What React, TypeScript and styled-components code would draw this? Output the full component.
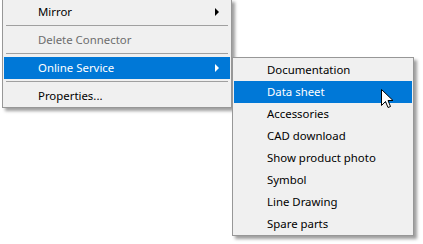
import styled, { createGlobalStyle } from 'styled-components';

const GlobalStyle = createGlobalStyle`
  html, body {
    margin: 0;
    padding: 0;
    background: #ffffff;
  }
  body {
    font-family: "Noto Sans", "Open Sans", sans-serif;
  }
`;

const Screen = styled.div`
  width: 423px;
  height: 244px;
  overflow: hidden;
  display: flex;
  align-items: flex-start;
  position: relative;
  background: #ffffff;
`;

const Menu = styled.div<{ $width: number; $top: number; $left: number }>`
  width: ${(p) => p.$width}px;
  margin-top: ${(p) => p.$top}px;
  margin-left: ${(p) => p.$left}px;
  box-sizing: border-box;
  flex: none;
  background: #f0f0f0;
  border: 1px solid #979797;
  padding: 1px 1px 0;
  box-shadow: 3px 3px 3px rgba(0, 0, 0, 0.38);
`;

const Item = styled.div<{ $active?: boolean; $disabled?: boolean; $indent: number }>`
  height: 22px;
  display: flex;
  align-items: center;
  padding-left: ${(p) => p.$indent}px;
  padding-right: 11px;
  font-size: 11.4px;
  line-height: 22px;
  background: ${(p) => (p.$active ? '#0078d7' : 'transparent')};
  color: ${(p) => (p.$active ? '#ffffff' : p.$disabled ? '#6d6d6d' : '#000000')};
  white-space: nowrap;
`;

const Label = styled.span`
  flex: 1;
`;

const Arrow = styled.span<{ $light?: boolean }>`
  width: 0;
  height: 0;
  border-top: 4px solid transparent;
  border-bottom: 4px solid transparent;
  border-left: 4px solid ${(p) => (p.$light ? '#ffffff' : '#000000')};
`;

const Separator = styled.div`
  height: 6px;
  display: flex;
  flex-direction: column;
  padding: 2px 2px 0;
  box-sizing: border-box;

  &::before {
    content: '';
    height: 1px;
    background: #a0a0a0;
  }
`;

const Cursor = styled.svg`
  position: absolute;
  left: 381px;
  top: 89px;
`;

const subItems = [
  'Documentation',
  'Data sheet',
  'Accessories',
  'CAD download',
  'Show product photo',
  'Symbol',
  'Line Drawing',
  'Spare parts',
];

export default function App() {
  return (
    <Screen>
      <GlobalStyle />
      <Menu $width={230} $top={-1} $left={2}>
        <Item $indent={34}>
          <Label>Mirror</Label>
          <Arrow />
        </Item>
        <Separator />
        <Item $indent={34} $disabled>
          <Label>Delete Connector</Label>
        </Item>
        <Separator />
        <Item $indent={34} $active>
          <Label>Online Service</Label>
          <Arrow $light />
        </Item>
        <Separator />
        <Item $indent={34}>
          <Label>Properties...</Label>
        </Item>
      </Menu>
      <Menu $width={182} $top={57} $left={0}>
        {subItems.map((name) => (
          <Item key={name} $indent={33} $active={name === 'Data sheet'}>
            <Label>{name}</Label>
          </Item>
        ))}
      </Menu>
      <Cursor width="13" height="21" viewBox="0 0 13 21">
        <path
          d="M0.5 0.5 L0.5 16.5 L4.5 12.5 L7 18.5 L9.5 17.5 L7 11.5 L12 11.5 Z"
          fill="#ffffff"
          stroke="#000000"
          strokeWidth="1"
          strokeLinejoin="miter"
        />
      </Cursor>
    </Screen>
  );
}
